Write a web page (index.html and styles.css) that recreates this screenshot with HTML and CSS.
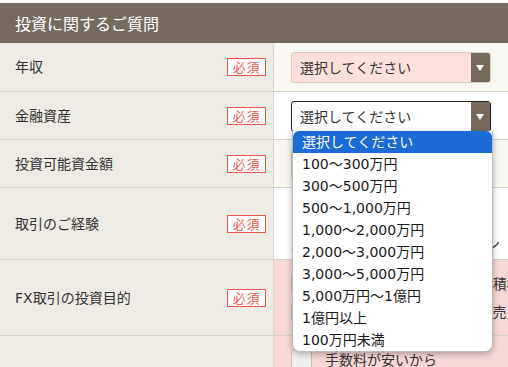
FILE: index.html
```html
<!DOCTYPE html>
<html lang="ja">
<head>
    <meta charset="UTF-8">
    <title>投資に関するご質問</title>
    <link rel="stylesheet" href="styles.css">
</head>
<body>
    <div class="page">
        <div class="header">投資に関するご質問</div>

        <div class="form">
            <div class="row r1">
                <div class="label"><span>年収</span><span class="req">必須</span></div>
                <div class="field beige">
                    <div class="select error"><span>選択してください</span><i class="arrow"></i></div>
                </div>
            </div>
            <div class="row r2">
                <div class="label"><span>金融資産</span><span class="req">必須</span></div>
                <div class="field white">
                    <div class="select focus"><span>選択してください</span><i class="arrow"></i></div>
                </div>
            </div>
            <div class="row r3">
                <div class="label"><span>投資可能資金額</span><span class="req">必須</span></div>
                <div class="field beige">
                    <div class="select"><span>選択してください</span><i class="arrow"></i></div>
                </div>
            </div>
            <div class="row r4">
                <div class="label"><span>取引のご経験</span><span class="req">必須</span></div>
                <div class="field white">
                    <div class="note">スワップ取引・先物・オプション</div>
                </div>
            </div>
            <div class="row r5">
                <div class="label"><span>FX取引の投資目的</span><span class="req">必須</span></div>
                <div class="field pink">
                    <div class="check"><i class="box"></i>より高い収益を得るために積極</div>
                    <div class="check"><i class="box"></i>スマホで手軽に少額からも売買</div>
                </div>
            </div>
            <div class="row r6">
                <div class="label"></div>
                <div class="field pink">
                    <div class="check"><i class="box"></i>手数料が安いから</div>
                </div>
            </div>
        </div>

        <ul class="dropdown">
            <li class="active">選択してください</li>
            <li>100～300万円</li>
            <li>300～500万円</li>
            <li>500～1,000万円</li>
            <li>1,000～2,000万円</li>
            <li>2,000～3,000万円</li>
            <li>3,000～5,000万円</li>
            <li>5,000万円～1億円</li>
            <li>1億円以上</li>
            <li>100万円未満</li>
        </ul>
    </div>
</body>
</html>
```

FILE: styles.css
```css
body {
    margin: 0;
    padding: 0;
    background-color: #ffffff;
    font-family: "Noto Sans CJK JP", "Noto Sans", sans-serif;
    color: #333;
    overflow: hidden;
}
.page {
    position: relative;
    padding-top: 3px;
}
.header {
    height: 40px;
    background-color: #756a5d;
    color: white;
    font-size: 16px;
    line-height: 40px;
    padding-left: 15px;
}
.row {
    display: grid;
    grid-template-columns: 274px 1fr;
    border-bottom: 1px solid #d8d2c5;
}
.r1 { height: 48px; }
.r2 { height: 47px; }
.r3 { height: 47px; }
.r4 { height: 71px; }
.r5 { height: 75px; }
.r6 { height: 40px; border-bottom: none; }
.label {
    background-color: #eeebe4;
    border-right: 1px solid #ddd7ca;
    display: flex;
    align-items: center;
    justify-content: space-between;
    padding: 0 7px 0 15px;
    font-size: 14px;
    color: #333;
}
.label span:first-child {
    font-family: "DejaVu Sans", "Noto Sans CJK JP", sans-serif;
    margin-top: -2px;
}
.req {
    width: 37px;
    height: 16px;
    border: 1.5px solid #e8594c;
    background-color: white;
    color: #e8594c;
    font-size: 13px;
    line-height: 16px;
    letter-spacing: 1px;
    text-align: center;
}
.field {
    padding: 9px 0 0 17px;
    overflow: hidden;
}
.beige { background-color: #f9f7f2; }
.white { background-color: #ffffff; }
.pink { background-color: #f6d9d6; }
.select {
    width: 198px;
    height: 29px;
    border: 1px solid #d8cdbf;
    border-radius: 3px;
    background-color: white;
    display: flex;
    align-items: center;
    justify-content: space-between;
    font-size: 14px;
    overflow: hidden;
}
.select span {
    padding-left: 8px;
    margin-top: -2px;
}
.select.error {
    background-color: #fde0dc;
}
.select.focus {
    border-color: #222;
}
.arrow {
    width: 19px;
    height: 100%;
    background-color: #766a5c;
    position: relative;
}
.arrow::after {
    content: "";
    position: absolute;
    left: 5px;
    top: 12px;
    border-left: 4px solid transparent;
    border-right: 4px solid transparent;
    border-top: 6px solid white;
}
.note {
    padding-top: 36px;
    margin-left: -1px;
    font-size: 14px;
    white-space: nowrap;
}
.check {
    display: flex;
    align-items: center;
    gap: 13px;
    font-size: 14px;
    height: 28px;
    white-space: nowrap;
}
.box {
    flex: none;
    width: 19px;
    height: 19px;
    border: 1px solid #c9c0b5;
    border-radius: 4px;
    background-color: #f1efeb;
}
.r6 .field {
    padding-top: 9px;
}
.dropdown {
    position: absolute;
    left: 292px;
    top: 131px;
    width: 199px;
    margin: 0;
    padding: 0;
    list-style: none;
    background-color: white;
    border-radius: 0 0 8px 8px;
    border: 1px solid #bbb;
    border-top: none;
    box-shadow: 0 2px 6px rgba(0, 0, 0, 0.3);
    font-family: "DejaVu Sans", "Noto Sans CJK JP", sans-serif;
    font-size: 14px;
    overflow: hidden;
}
.dropdown li {
    height: 22px;
    line-height: 22px;
    padding-left: 9px;
    color: #1a1a1a;
}
.dropdown li.active {
    background-color: #1b6ad6;
    color: white;
    border-radius: 6px 6px 0 0;
}
```
